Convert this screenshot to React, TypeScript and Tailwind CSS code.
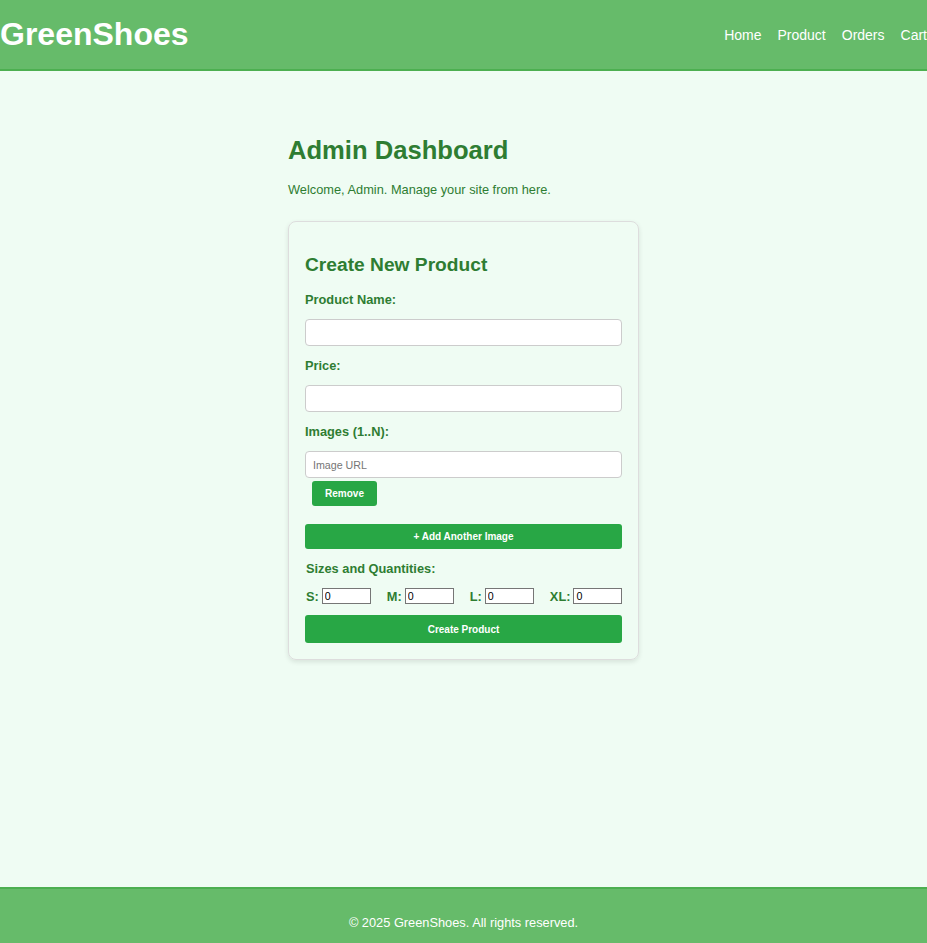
import React from "react";

const sizes = ["S", "M", "L", "XL"];

function Label({ children, className = "" }: { children: React.ReactNode; className?: string }) {
  return (
    <label className={`block h-[15px] text-[12.8px] font-bold leading-[15px] text-[#2e7d32] ${className}`}>
      {children}
    </label>
  );
}

function TextInput({ placeholder = "", className = "" }: { placeholder?: string; className?: string }) {
  return (
    <input
      type="text"
      placeholder={placeholder}
      className={`block h-[27px] w-full rounded-[4px] border border-[#cccccc] bg-white px-[7px] text-[10.67px] text-black placeholder:text-[#757575] ${className}`}
    />
  );
}

export default function App() {
  return (
    <div className="flex min-h-[953px] flex-col bg-[#effcf3] font-['Liberation_Sans',Arial,sans-serif]">
      <header className="flex h-[71px] items-center justify-between border-b-2 border-[#4caf50] bg-[#66bb6a]">
        <h1 className="text-[32px] font-bold leading-[37px] text-white">GreenShoes</h1>
        <nav className="mt-[2px] flex gap-4 text-[14px] text-white">
          <a href="#">Home</a>
          <a href="#">Product</a>
          <a href="#">Orders</a>
          <a href="#">Cart</a>
        </nav>
      </header>

      <main className="flex flex-1 justify-center">
        <div className="w-[351px] pt-[64px]">
          <h2 className="text-[25.6px] font-bold leading-[30px] text-[#2e7d32]">Admin Dashboard</h2>
          <p className="mt-[17px] text-[12.8px] leading-[15px] text-[#2e7d32]">
            Welcome, Admin. Manage your site from here.
          </p>

          <form className="mt-[24px] rounded-[8px] border border-[#dddddd] p-4 shadow-[0_2px_5px_rgba(0,0,0,0.1)]">
            <h3 className="mt-[16px] text-[19.2px] font-bold leading-[22px] text-[#2e7d32]">Create New Product</h3>

            <Label className="mt-[16px]">Product Name:</Label>
            <TextInput className="mt-[12px]" />

            <Label className="mt-[12px]">Price:</Label>
            <TextInput className="mt-[12px]" />

            <Label className="mt-[12px]">Images (1..N):</Label>
            <TextInput className="mt-[12px]" placeholder="Image URL" />
            <button
              type="button"
              className="ml-[7px] mt-[3px] block h-[25px] w-[65px] rounded-[3px] bg-[#28a745] text-[10px] font-bold text-white"
            >
              Remove
            </button>

            <button
              type="button"
              className="mt-[18px] block h-[25px] w-full rounded-[3px] bg-[#28a745] text-[10px] font-bold text-white"
            >
              + Add Another Image
            </button>

            <Label className="ml-px mt-[12px]">Sizes and Quantities:</Label>
            <div className="ml-px mt-[12px] flex items-center gap-4">
              {sizes.map((s) => (
                <div key={s} className="flex items-center">
                  <span className="mr-[3px] text-[12.8px] font-bold leading-[15px] text-[#2e7d32]">{s}:</span>
                  <input
                    type="number"
                    defaultValue={0}
                    className="h-[16px] w-[49px] border border-[#767676] bg-white px-[2px] text-[10.67px] leading-[14px] text-black [appearance:textfield] [&::-webkit-inner-spin-button]:appearance-none"
                  />
                </div>
              ))}
            </div>

            <button
              type="submit"
              className="mt-[11px] block h-[28px] w-full rounded-[3px] bg-[#28a745] text-[10px] font-bold text-white"
            >
              Create Product
            </button>
          </form>
        </div>
      </main>

      <footer className="flex h-[66px] items-center justify-center border-t-2 border-[#4caf50] bg-[#66bb6a] pt-[3px]">
        <p className="text-[12.8px] text-white">© 2025 GreenShoes. All rights reserved.</p>
      </footer>
    </div>
  );
}
